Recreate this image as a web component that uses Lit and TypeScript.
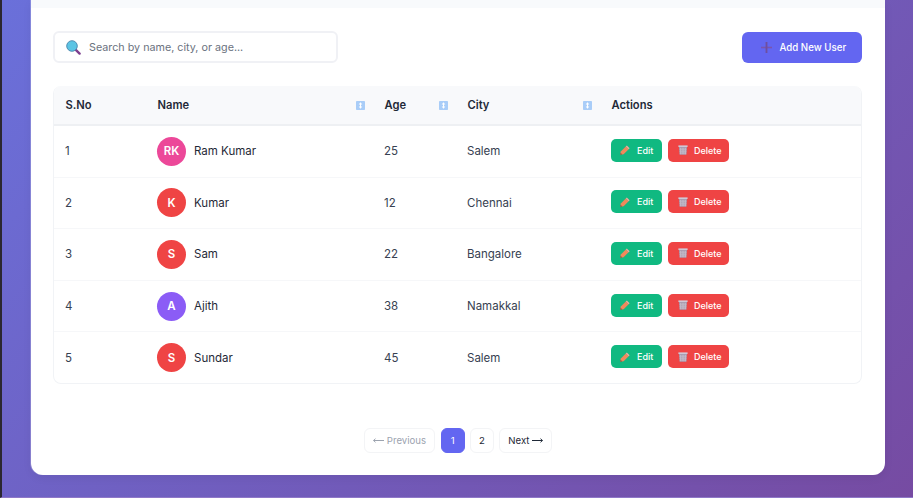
import { LitElement, html, css, svg } from "lit";
import { customElement } from "lit/decorators.js";

interface User {
  id: number;
  name: string;
  initials: string;
  color: string;
  age: number;
  city: string;
}

const users: User[] = [
  { id: 1, name: "Ram Kumar", initials: "RK", color: "#ec4899", age: 25, city: "Salem" },
  { id: 2, name: "Kumar", initials: "K", color: "#ef4444", age: 12, city: "Chennai" },
  { id: 3, name: "Sam", initials: "S", color: "#ef4444", age: 22, city: "Bangalore" },
  { id: 4, name: "Ajith", initials: "A", color: "#8b5cf6", age: 38, city: "Namakkal" },
  { id: 5, name: "Sundar", initials: "S", color: "#ef4444", age: 45, city: "Salem" },
];

const sortIcon = svg`<svg class="sort" width="9" height="9" viewBox="0 0 9 9">
  <rect width="9" height="9" rx="0.8" fill="#a9cdf8"/>
  <path d="M4.5 1.2 6.3 3.4H2.7ZM4.5 7.8 2.7 5.6H6.3Z" fill="#fff"/>
  <rect x="4" y="3" width="1" height="3" fill="#fff"/>
</svg>`;

const pencilIcon = svg`<svg width="10" height="10" viewBox="0 0 10 10">
  <path d="M0.2 9.8 0.8 6.4 5.8 1.4 8.6 4.2 3.6 9.2Z" fill="#f0895c"/>
  <path d="M5.8 1.4 6.8 0.4 9.6 3.2 8.6 4.2Z" fill="#f2a9a0"/>
  <path d="M0.2 9.8 0.6 7.8 2.2 9.4Z" fill="#7a5240"/>
</svg>`;

const trashIcon = svg`<svg width="10" height="10" viewBox="0 0 10 10">
  <rect x="0.4" y="0.4" width="9.2" height="1.6" fill="#cfc8d6"/>
  <path d="M1 2H9L8.4 9.8H1.6Z" fill="#a899ae"/>
  <path d="M2.8 2.8V9.2M5 2.8V9.2M7.2 2.8V9.2" stroke="#d6d0da" stroke-width="0.8"/>
  <path d="M1.4 4.4H8.6M1.5 6.4H8.5M1.6 8.2H8.4" stroke="#c4bbc9" stroke-width="0.5"/>
</svg>`;

const searchIcon = svg`<svg width="15" height="15" viewBox="0 0 15 15">
  <path d="M9.8 9.8 13.6 13.6" stroke="#7e3f8f" stroke-width="2.4" stroke-linecap="round"/>
  <circle cx="6" cy="6" r="5.3" fill="#5cc4e4" stroke="#4a86ad" stroke-width="0.9"/>
</svg>`;

const plusIcon = svg`<svg width="11" height="11" viewBox="0 0 11 11">
  <path d="M0 5.5H11" stroke="#7a55ad" stroke-width="1.6"/>
  <path d="M5.5 0V11" stroke="#6f4f9e" stroke-width="1.8"/>
</svg>`;

const arrowLeft = svg`<svg width="11" height="5" viewBox="0 0 11 5">
  <path d="M0.5 2.5H11M2.5 0.7 0.6 2.5 2.5 4.3" fill="none" stroke="currentColor" stroke-width="1"/>
</svg>`;

const arrowRight = svg`<svg width="11" height="5" viewBox="0 0 11 5">
  <path d="M0 2.5H10.5M8.5 0.7 10.4 2.5 8.5 4.3" fill="none" stroke="currentColor" stroke-width="1"/>
</svg>`;

@customElement("app-root")
export class AppRoot extends LitElement {
  static styles = css`
    :host {
      display: block;
      width: 913px;
      height: 498px;
      overflow: hidden;
      font-family: Inter, "Liberation Sans", sans-serif;
      color: #1f2937;
    }

    .page {
      box-sizing: border-box;
      height: 498px;
      display: flex;
      align-items: flex-start;
      padding-left: 29px;
      border-left: 2px solid #2b2730;
      border-bottom: 1px solid #8f78c8;
      background: linear-gradient(135deg, #6a70da 0%, #764ba2 100%);
    }

    .card {
      width: 854px;
      height: 475px;
      background: #fff;
      border-radius: 0 0 12px 12px;
      box-shadow: -1px 0 0 rgba(255, 255, 255, 0.2), 0 3px 10px rgba(0, 0, 0, 0.06);
      display: flex;
      flex-direction: column;
    }

    .strip {
      height: 8px;
      background: #f8fafc;
      flex: none;
    }

    .content {
      padding: 23px 23px 0 22px;
      display: flex;
      flex-direction: column;
    }

    .toolbar {
      display: flex;
      justify-content: space-between;
      align-items: center;
      height: 32px;
      margin-bottom: 23px;
    }

    .search {
      box-sizing: border-box;
      width: 285px;
      height: 32px;
      border: 2px solid #f0f1f5;
      border-radius: 6px;
      display: flex;
      align-items: center;
      gap: 8px;
      padding: 0 11px;
      color: #6b7280;
      font-size: 10.75px;
    }

    .add {
      box-sizing: border-box;
      width: 120px;
      height: 31px;
      margin-top: 1px;
      border: none;
      border-radius: 6px;
      background: #6366f1;
      color: #fff;
      font: 500 9.7px Inter, "Liberation Sans", sans-serif;
      display: flex;
      align-items: center;
      gap: 7.5px;
      padding: 0 0 0 19px;
    }

    .table-wrap {
      border: 1px solid #f1f3f6;
      border-top: none;
      border-radius: 8px;
      overflow: hidden;
    }

    table {
      width: 100%;
      border-collapse: collapse;
      table-layout: fixed;
      font-size: 11.5px;
    }

    th {
      height: 38px;
      background: #f8f9fb;
      border-bottom: 2px solid #eef0f3;
      text-align: left;
      padding: 0 13px 0 11.5px;
      font-size: 11.2px;
      font-weight: 600;
      color: #1f2937;
    }

    .th-inner {
      display: flex;
      justify-content: space-between;
      align-items: center;
    }

    .sort {
      margin-right: -5px;
    }

    td {
      height: 50.6px;
      padding: 0 13px 0 11px;
      border-bottom: 1px solid #f6f7f9;
      color: #374151;
    }

    tr:last-child td {
      border-bottom: none;
    }

    .user {
      display: flex;
      align-items: center;
      gap: 8px;
      color: #1f2937;
    }

    .avatar {
      width: 29px;
      height: 29px;
      border-radius: 50%;
      color: #fff;
      font-size: 11.5px;
      font-weight: 600;
      display: flex;
      align-items: center;
      justify-content: center;
      flex: none;
    }

    .actions {
      display: flex;
      gap: 6px;
      margin-bottom: 2px;
    }

    .btn {
      box-sizing: border-box;
      height: 23px;
      border: none;
      border-radius: 5px;
      color: #fff;
      font: 500 9px Inter, "Liberation Sans", sans-serif;
      display: flex;
      align-items: center;
    }

    .edit {
      width: 51px;
      background: #10b981;
      gap: 7px;
      padding: 0 0 0 9px;
    }

    .delete {
      width: 61px;
      background: #ef4444;
      gap: 6px;
      padding: 0 0 0 10px;
    }

    .pager {
      display: flex;
      justify-content: center;
      gap: 5.6px;
      margin-top: 44px;
      padding-left: 1px;
    }

    .pg {
      box-sizing: border-box;
      height: 25px;
      border: 1px solid #f3f4f6;
      border-radius: 6px;
      background: #fff;
      color: #1f2937;
      font: 400 9.6px Inter, "Liberation Sans", sans-serif;
      display: flex;
      align-items: center;
      justify-content: center;
      gap: 2.5px;
      padding: 0;
    }

    .prev {
      width: 71.5px;
      color: #9ca3af;
    }

    .num {
      width: 23.5px;
    }

    .active {
      background: #6366f1;
      border-color: #6366f1;
      color: #fff;
    }

    .next {
      width: 52.8px;
    }
  `;

  render() {
    return html`
      <div class="page">
        <div class="card">
          <div class="strip"></div>
          <div class="content">
            <div class="toolbar">
              <div class="search">${searchIcon}<span>Search by name, city, or age...</span></div>
              <button class="add">${plusIcon}<span>Add New User</span></button>
            </div>
            <div class="table-wrap">
              <table>
                <colgroup>
                  <col style="width:92px" />
                  <col style="width:227px" />
                  <col style="width:83px" />
                  <col style="width:144px" />
                  <col />
                </colgroup>
                <thead>
                  <tr>
                    <th>S.No</th>
                    <th><div class="th-inner">Name ${sortIcon}</div></th>
                    <th><div class="th-inner">Age ${sortIcon}</div></th>
                    <th><div class="th-inner">City ${sortIcon}</div></th>
                    <th>Actions</th>
                  </tr>
                </thead>
                <tbody>
                  ${users.map(
                    (u) => html`
                      <tr>
                        <td>${u.id}</td>
                        <td>
                          <div class="user">
                            <span class="avatar" style="background:${u.color}">${u.initials}</span>
                            <span>${u.name}</span>
                          </div>
                        </td>
                        <td>${u.age}</td>
                        <td>${u.city}</td>
                        <td>
                          <div class="actions">
                            <button class="btn edit">${pencilIcon}<span>Edit</span></button>
                            <button class="btn delete">${trashIcon}<span>Delete</span></button>
                          </div>
                        </td>
                      </tr>
                    `
                  )}
                </tbody>
              </table>
            </div>
            <div class="pager">
              <button class="pg prev">${arrowLeft}<span>Previous</span></button>
              <button class="pg num active">1</button>
              <button class="pg num">2</button>
              <button class="pg next"><span>Next</span>${arrowRight}</button>
            </div>
          </div>
        </div>
      </div>
    `;
  }
}
